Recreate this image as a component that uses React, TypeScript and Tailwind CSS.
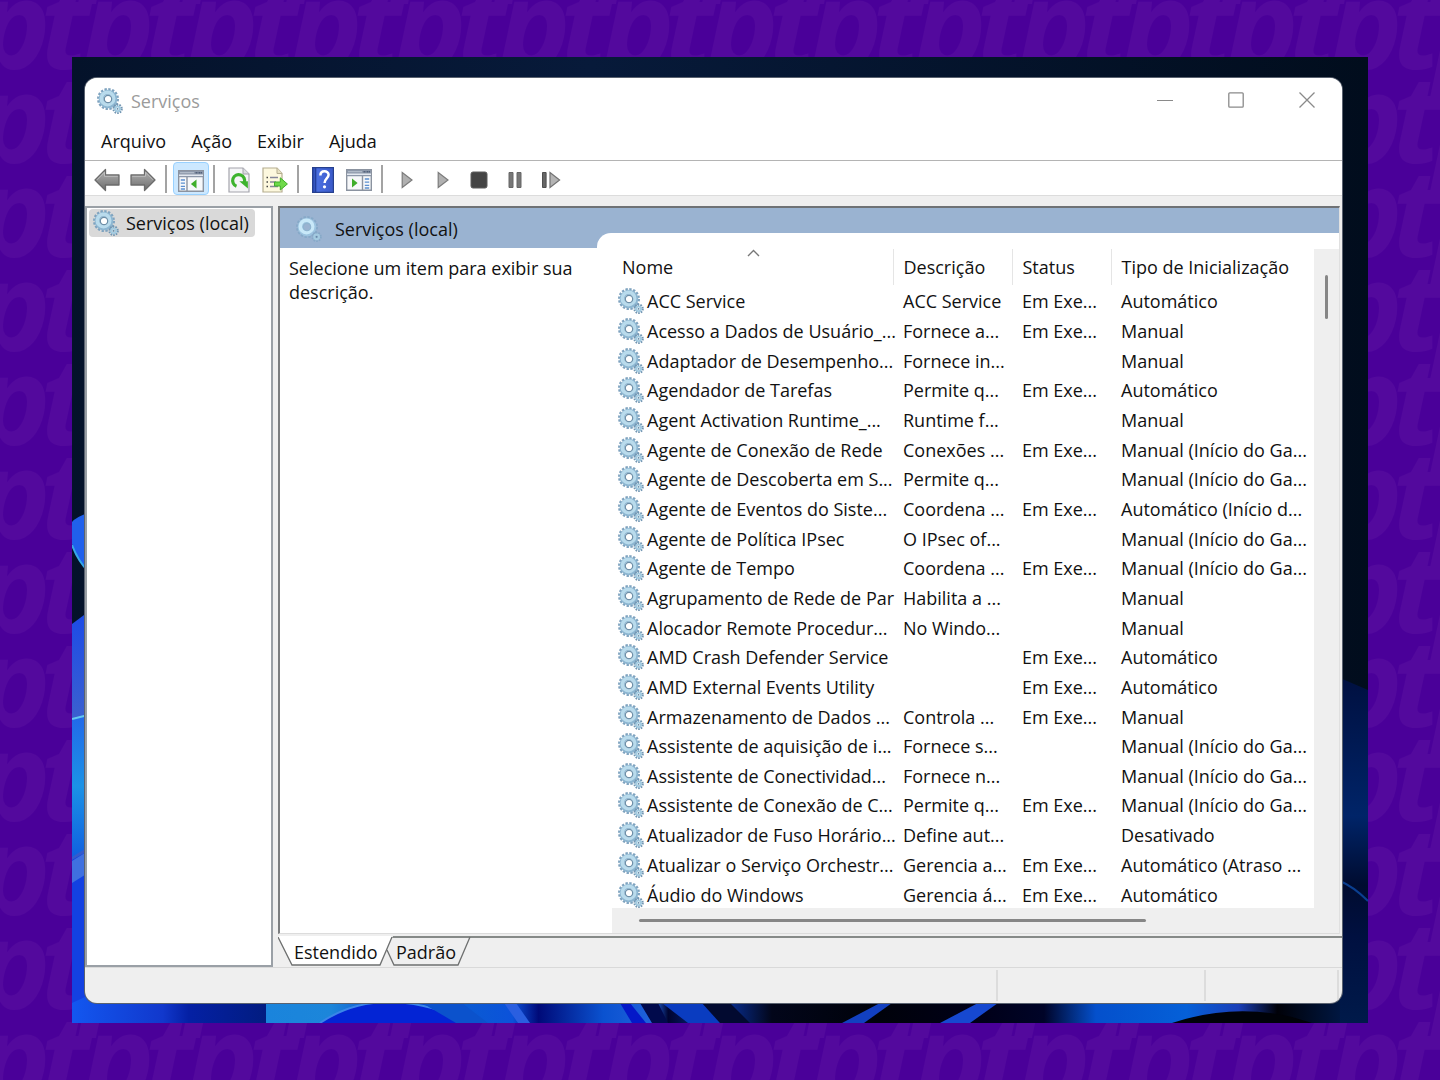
import React from 'react';

const services: [string, string, string, string][] = [
  ['ACC Service', 'ACC Service', 'Em Exe...', 'Automático'],
  ['Acesso a Dados de Usuário_...', 'Fornece a...', 'Em Exe...', 'Manual'],
  ['Adaptador de Desempenho...', 'Fornece in...', '', 'Manual'],
  ['Agendador de Tarefas', 'Permite q...', 'Em Exe...', 'Automático'],
  ['Agent Activation Runtime_...', 'Runtime f...', '', 'Manual'],
  ['Agente de Conexão de Rede', 'Conexões ...', 'Em Exe...', 'Manual (Início do Ga...'],
  ['Agente de Descoberta em S...', 'Permite q...', '', 'Manual (Início do Ga...'],
  ['Agente de Eventos do Siste...', 'Coordena ...', 'Em Exe...', 'Automático (Início d...'],
  ['Agente de Política IPsec', 'O IPsec of...', '', 'Manual (Início do Ga...'],
  ['Agente de Tempo', 'Coordena ...', 'Em Exe...', 'Manual (Início do Ga...'],
  ['Agrupamento de Rede de Par', 'Habilita a ...', '', 'Manual'],
  ['Alocador Remote Procedur...', 'No Windo...', '', 'Manual'],
  ['AMD Crash Defender Service', '', 'Em Exe...', 'Automático'],
  ['AMD External Events Utility', '', 'Em Exe...', 'Automático'],
  ['Armazenamento de Dados ...', 'Controla ...', 'Em Exe...', 'Manual'],
  ['Assistente de aquisição de i...', 'Fornece s...', '', 'Manual (Início do Ga...'],
  ['Assistente de Conectividad...', 'Fornece n...', '', 'Manual (Início do Ga...'],
  ['Assistente de Conexão de C...', 'Permite q...', 'Em Exe...', 'Manual (Início do Ga...'],
  ['Atualizador de Fuso Horário...', 'Define aut...', '', 'Desativado'],
  ['Atualizar o Serviço Orchestr...', 'Gerencia a...', 'Em Exe...', 'Automático (Atraso ...'],
  ['Áudio do Windows', 'Gerencia á...', 'Em Exe...', 'Automático'],
];

function Gears({ pale = false }: { pale?: boolean }) {
  return (
    <svg width="26" height="26" viewBox="0 0 26 26" fill="none" className="shrink-0" aria-hidden="true">
      <circle cx="11" cy="11" r="9.6" stroke={pale ? '#86a9c8' : '#7fa3bf'} strokeWidth="2.8" strokeDasharray="2.3 1.47" />
      <circle cx="11" cy="11" r="6.8" stroke={pale ? '#9cc3df' : '#8db6d1'} strokeWidth="5" />
      <circle cx="10.5" cy="10.4" r="6.2" stroke={pale ? '#c8e8f8' : '#b9dbec'} strokeWidth="3.6" />
      <circle cx="11" cy="11" r="3.7" fill={pale ? '#9ab3d1' : '#fff'} stroke={pale ? '#8fb4cf' : '#6d8fa8'} strokeWidth="1.2" />
      <circle cx="20.6" cy="20.8" r="4" stroke={pale ? '#86a9c8' : '#7296b2'} strokeWidth="2.4" strokeDasharray="1.5 1.01" />
      <circle cx="20.6" cy="20.8" r="2.4" stroke="#a3cbe1" strokeWidth="2" />
      <circle cx="20.6" cy="20.8" r="0.9" fill="#5c87a5" />
    </svg>
  );
}

function Arrow({ flip = false }: { flip?: boolean }) {
  return (
    <svg width="26" height="24" viewBox="0 0 26 24" className={flip ? '-scale-x-100' : ''} aria-hidden="true">
      <defs>
        <linearGradient id={flip ? 'arrow-r' : 'arrow-l'} x1="0" y1="0" x2="0" y2="1">
          <stop offset="0" stopColor="#b4b4b4" />
          <stop offset="1" stopColor="#6c6c6c" />
        </linearGradient>
      </defs>
      <path d="M1 12 11.5 1.5V7H25v10H11.5v5.5Z" fill={flip ? 'url(#arrow-r)' : 'url(#arrow-l)'} stroke="#6b6b6b" strokeWidth="1.3" strokeLinejoin="round" />
      <path d="M3 11.8 10.5 4.2V8.3H23.8" fill="none" stroke="#bdbdbd" strokeWidth="1" />
    </svg>
  );
}

function PaneIcon({ right = false }: { right?: boolean }) {
  return (
    <svg width="26" height="22" viewBox="0 0 26 22" aria-hidden="true">
      <path d="M.7.7h24.6v20.6H.7Z" fill="#f7f8fa" stroke="#8b93a0" strokeWidth="1.4" />
      <path d="M1 1h24v6.2H1Z" fill="#8d98aa" />
      <path d="M1 4.5h24v1.4H1Z" fill="#e3e8f0" />
      <path d="M2 2.7h14" stroke="#b9c2cf" />
      <path d="M17.5 2.7h2M20.5 2.7h2M23 2.7h1" stroke="#52617a" strokeWidth="1.4" />
      {right ? (
        <>
          <path d="M16.5 7v14" stroke="#8b93a0" strokeWidth="1.4" />
          <path d="M18.8 10h4.4M18.8 13.2h4.4M18.8 16.4h4.4M18.8 19h4.4" stroke="#5c8fd0" strokeWidth="1.3" />
          <path d="M6 9.5v9l5.6-4.5Z" fill="#3fae2a" />
        </>
      ) : (
        <>
          <path d="M9 7v14" stroke="#8b93a0" strokeWidth="1.4" />
          <path d="M2.8 10h4.2M2.8 13.2h4.2M2.8 16.4h4.2M2.8 19h4.2" stroke="#5c8fd0" strokeWidth="1.3" />
          <path d="M18.5 9.5v9L12.9 14Z" fill="#3fae2a" />
        </>
      )}
    </svg>
  );
}

function RefreshIcon() {
  return (
    <svg width="22" height="26" viewBox="0 0 22 26" aria-hidden="true">
      <path d="M1 1h14l6 6v18H1Z" fill="#f5f5f7" stroke="#a4a4ac" strokeWidth="1.2" />
      <path d="M15 1v6h6" fill="#dcdce2" stroke="#a4a4ac" />
      <path d="M8.5 19.2a6 6 0 1 1 7.8-3.6" fill="none" stroke="#3db32e" strokeWidth="3.2" />
      <path d="M11.3 14.2h8.6v7.2Z" fill="#3db32e" />
    </svg>
  );
}

function ExportIcon() {
  return (
    <svg width="26" height="26" viewBox="0 0 26 26" aria-hidden="true">
      <path d="M1 1h14l5 5.5V25H1Z" fill="#fdf8de" stroke="#b5ad90" strokeWidth="1.2" />
      <path d="M15 1v5.5h5" fill="#e8e2c4" stroke="#b5ad90" />
      <path d="M4.5 10.5H6M4.5 15H6M4.5 19.5H6" stroke="#444" strokeWidth="1.7" />
      <path d="M8 10.5h8M8 15h6M8 19.5h8" stroke="#86869a" strokeWidth="1.5" />
      <path d="M12.5 15h5.8v-4.2L25.4 17l-7.1 6V19h-5.8Z" fill="#6fd94a" stroke="#3fae2a" />
    </svg>
  );
}

function HelpIcon() {
  return (
    <svg width="22" height="26" viewBox="0 0 22 26" aria-hidden="true">
      <defs>
        <linearGradient id="help" x1="0" y1="0" x2="1" y2="0">
          <stop offset="0" stopColor="#2746ae" />
          <stop offset=".25" stopColor="#4a6fe0" />
          <stop offset="1" stopColor="#3a59c9" />
        </linearGradient>
      </defs>
      <path d="M.6.6h20.8v24.8H.6Z" fill="url(#help)" stroke="#26408f" strokeWidth="1.2" />
      <path d="M3.6 1v24" stroke="#233f9c" strokeWidth="1.2" />
      <path d="M8.4 8.4c0-5.6 8.2-5.2 8.2-.6 0 3.6-4 3.8-4 8.2" fill="none" stroke="#fff" strokeWidth="2.5" />
      <circle cx="12.5" cy="19.8" r="1.6" fill="#fff" />
    </svg>
  );
}

function PlayIcon() {
  return (
    <svg width="12" height="18" viewBox="0 0 12 18" aria-hidden="true">
      <path d="M1.2 1.5v15L11 9Z" fill="#b0b0b0" stroke="#7c7c7c" strokeWidth="1.2" />
    </svg>
  );
}

function StopIcon() {
  return (
    <svg width="18" height="18" viewBox="0 0 18 18" aria-hidden="true">
      <rect x="1" y="1" width="16" height="16" rx="2" fill="#444" stroke="#5c5c5c" />
    </svg>
  );
}

function PauseIcon() {
  return (
    <svg width="14" height="18" viewBox="0 0 14 18" aria-hidden="true">
      <path d="M1 1.5h4v15H1ZM9 1.5h4v15H9Z" fill="#777" stroke="#666" />
    </svg>
  );
}

function RestartIcon() {
  return (
    <svg width="20" height="18" viewBox="0 0 20 18" aria-hidden="true">
      <path d="M1.5 1.5h3.6v15H1.5Z" fill="#666" stroke="#4f4f4f" />
      <path d="M9 1.5v15L18.6 9Z" fill="#b4b4b4" stroke="#747474" strokeWidth="1.2" />
    </svg>
  );
}

function ToolButton({ label, active = false, children }: { label: string; active?: boolean; children: React.ReactNode }) {
  return (
    <button
      type="button"
      aria-label={label}
      className={
        active
          ? 'flex h-[33px] w-9 items-center justify-center rounded-sm border border-[#99d1ff] bg-[#cce8ff] pt-1'
          : 'flex h-[33px] w-9 items-center justify-center pt-0.5'
      }
    >
      {children}
    </button>
  );
}

function Separator() {
  return <span className="mr-1.5 mb-0.5 ml-1 h-7 w-0.5 bg-[#a3a3a3]" />;
}

const tileOffsets = [-104, 0, 104].flatMap((x) => [-94, 0, 94].map((y) => ({ x, y })));

function Backdrop() {
  return (
    <svg className="absolute inset-0 h-full w-full" aria-hidden="true">
      <defs>
        <text id="mark" x="-22 40" y="69" fill="#53099d" className="font-['Open_Sans','Noto_Sans',sans-serif] text-[122px] font-bold italic">
          pt
        </text>
        <pattern id="marks" width="104" height="94" patternUnits="userSpaceOnUse">
          {tileOffsets.map(({ x, y }) => (
            <use key={`${x}/${y}`} href="#mark" x={x} y={y} />
          ))}
        </pattern>
      </defs>
      <rect width="100%" height="100%" fill="url(#marks)" />
    </svg>
  );
}

function Wallpaper() {
  return (
    <svg className="absolute inset-0 h-full w-full" viewBox="0 0 1296 966" preserveAspectRatio="none" aria-hidden="true">
      <defs>
        <linearGradient id="sky" x1="0" y1="0" x2="1" y2="0">
          <stop offset="0" stopColor="#04122a" />
          <stop offset=".4" stopColor="#071a3a" />
          <stop offset="1" stopColor="#010d1d" />
        </linearGradient>
        <linearGradient id="petal" x1="0" y1="0" x2="0" y2="1">
          <stop offset="0" stopColor="#1c4be8" />
          <stop offset=".25" stopColor="#3a5fd0" />
          <stop offset="1" stopColor="#2c55c8" />
        </linearGradient>
        <linearGradient id="cyan" x1="0" y1="0" x2="0" y2="1">
          <stop offset="0" stopColor="#2268ea" />
          <stop offset=".5" stopColor="#1b92e6" />
          <stop offset="1" stopColor="#1060e0" />
        </linearGradient>
        <linearGradient id="floor" x1="0" y1="0" x2="1" y2="0">
          <stop offset="0" stopColor="#1357f0" />
          <stop offset=".07" stopColor="#1138cc" />
          <stop offset=".09" stopColor="#0420a4" />
          <stop offset=".15" stopColor="#021c80" />
          <stop offset=".15" stopColor="#1a84dc" />
          <stop offset=".2" stopColor="#1c86da" />
          <stop offset=".25" stopColor="#0c42cc" />
          <stop offset=".3" stopColor="#0a5bd2" />
          <stop offset=".34" stopColor="#0b52da" />
          <stop offset=".36" stopColor="#000a78" />
          <stop offset=".41" stopColor="#0a52d0" />
          <stop offset=".45" stopColor="#2162dc" />
          <stop offset=".46" stopColor="#000430" />
          <stop offset=".5" stopColor="#0a36a8" />
          <stop offset=".54" stopColor="#02061a" />
          <stop offset=".62" stopColor="#00020a" />
          <stop offset=".7" stopColor="#000018" />
          <stop offset=".75" stopColor="#000428" />
          <stop offset=".79" stopColor="#0450cc" />
          <stop offset=".86" stopColor="#0560d8" />
          <stop offset=".9" stopColor="#1a3fb8" />
          <stop offset=".93" stopColor="#000108" />
          <stop offset="1" stopColor="#00205a" />
        </linearGradient>
        <linearGradient id="right" x1="0" y1="0" x2="0" y2="1">
          <stop offset="0" stopColor="#001040" />
          <stop offset=".4" stopColor="#002468" />
          <stop offset=".6" stopColor="#000c30" />
          <stop offset=".75" stopColor="#001040" />
          <stop offset="1" stopColor="#001a4a" />
        </linearGradient>
      </defs>
      <path d="M0 0h1296v966H0Z" fill="url(#sky)" />
      <path d="M16 456Q4 460 0 465V487Q6 506 16 512Z" fill="#2060ec" />
      <path d="M0 488q6 16 16 26" stroke="#37a9e8" strokeWidth="2" fill="none" />
      <path d="M0 567 16 555V965H0Z" fill="url(#petal)" />
      <path d="M0 662 16 658V790L0 800Z" fill="url(#cyan)" />
      <path d="M0 662 16 658" stroke="#62c8f0" strokeWidth="2" />
      <path d="M0 803 16 794V966H0Z" fill="#1341e2" />
      <path d="M0 804 16 794v22L0 826Z" fill="#3f70e0" />
      <path d="M13 940h1283v26H0V946Z" fill="url(#floor)" />
      <path d="M248 966Q310 924 400 966Z" fill="#0324d4" />
      <path d="M248 966Q310 924 400 966" fill="none" stroke="#3a86e8" strokeWidth="2" />
      <path d="m350 946h40l26 20h-32Z" fill="#0b52cc" />
      <path d="m432 946h12l14 20h-12Z" fill="#2a5fe0" />
      <path d="m548 946h10l16 20h-14Z" fill="#0418c8" />
      <path d="m568 946h18l10 20h-16Z" fill="#010a4c" />
      <path d="m590 946h40l18 20h-32Z" fill="#0a3cc0" />
      <path d="m630 946h28l20 20h-30Z" fill="#020a30" />
      <path d="m770 966 38-20h12l-28 20Z" fill="#1240c0" />
      <path d="m868 966 38-20h20l-28 20Z" fill="#1648d0" />
      <path d="M1100 966q60-20 120-6l20 6Z" fill="#000208" />
      <path d="M1268 621l28 12v333h-28Z" fill="url(#right)" />
      <path d="M1268 824q14 6 28 20" stroke="#0a3f90" strokeWidth="2" fill="none" />
    </svg>
  );
}

export default function App() {
  return (
    <div className="relative flex min-h-screen flex-col overflow-hidden bg-[#4a0099] px-[72px] py-[57px] font-['Open_Sans','Noto_Sans',sans-serif] text-lg leading-6 text-[#111]">
      <Backdrop />
      <main className="relative flex flex-1 flex-col pt-[21px] pr-[26px] pb-5 pl-[13px]">
        <Wallpaper />
        <div className="relative flex flex-1 flex-col overflow-hidden rounded-xl bg-[#efefef] ring-1 ring-[#5a6270]">
          <header className="flex h-[46px] items-center bg-white pl-3">
            <Gears />
            <h1 className="ml-2 flex-1 text-[#9b9b9b]">Serviços</h1>
            <div className="flex pb-0.5 text-[#8a8a8a]">
              <button type="button" aria-label="Minimizar" className="flex h-11 w-[71px] items-center justify-center">
                <svg width="16" height="16" viewBox="0 0 16 16" stroke="currentColor" aria-hidden="true"><path d="M0 8.5h16" /></svg>
              </button>
              <button type="button" aria-label="Maximizar" className="flex h-11 w-[71px] items-center justify-center">
                <svg width="16" height="16" viewBox="0 0 16 16" fill="none" stroke="currentColor" strokeWidth="1.3" aria-hidden="true"><rect x=".8" y=".8" width="14.4" height="14.4" rx="1" /></svg>
              </button>
              <button type="button" aria-label="Fechar" className="flex h-11 w-[71px] items-center justify-center">
                <svg width="16" height="16" viewBox="0 0 16 16" stroke="currentColor" strokeWidth="1.3" aria-hidden="true"><path d="m.5.5 15 15M15.5.5l-15 15" /></svg>
              </button>
            </div>
          </header>

          <nav className="flex h-9 items-center gap-[25px] bg-white pb-0.5 pl-4" aria-label="Menu">
            <button type="button">Arquivo</button>
            <button type="button">Ação</button>
            <button type="button">Exibir</button>
            <button type="button">Ajuda</button>
          </nav>

          <div className="flex h-9 items-end border-y border-t-[#b4b4b4] border-b-[#dcdcdc] bg-white pl-1" role="toolbar" aria-label="Ferramentas">
            <ToolButton label="Voltar"><Arrow /></ToolButton>
            <ToolButton label="Avançar"><Arrow flip /></ToolButton>
            <Separator />
            <ToolButton label="Mostrar árvore de console" active><PaneIcon /></ToolButton>
            <Separator />
            <ToolButton label="Atualizar"><RefreshIcon /></ToolButton>
            <ToolButton label="Exportar lista"><ExportIcon /></ToolButton>
            <Separator />
            <ToolButton label="Ajuda"><HelpIcon /></ToolButton>
            <ToolButton label="Mostrar painel de ações"><PaneIcon right /></ToolButton>
            <Separator />
            <ToolButton label="Iniciar serviço"><PlayIcon /></ToolButton>
            <ToolButton label="Retomar serviço"><PlayIcon /></ToolButton>
            <ToolButton label="Parar serviço"><StopIcon /></ToolButton>
            <ToolButton label="Pausar serviço"><PauseIcon /></ToolButton>
            <ToolButton label="Reiniciar serviço"><RestartIcon /></ToolButton>
          </div>

          <div className="mt-2.5 flex flex-1 gap-[5px]">
            <aside className="w-[188px] shrink-0 border-2 border-[#9aa0a6] bg-white px-0.5 py-px">
              <button type="button" className="flex h-7 items-center gap-[7px] rounded-sm bg-[#d9d9d9] pr-1.5 pl-1 whitespace-nowrap">
                <Gears />
                Serviços (local)
              </button>
            </aside>

            <div className="flex min-w-0 flex-1 flex-col">
              <section className="mr-0.5 flex flex-1 border-t-2 border-r border-b border-l-2 border-t-[#6f7275] border-r-[#e0e0e0] border-b-[#dcdcdc] border-l-[#7b7d7f] bg-white">
                <div className="flex w-[317px] shrink-0 flex-col">
                  <h2 className="flex h-10 items-center gap-[13px] bg-[#9ab3d1] pt-0.5 pl-4">
                    <Gears pale />
                    Serviços (local)
                  </h2>
                  <p className="py-2 pr-2 pl-[9px]">Selecione um item para exibir sua descrição.</p>
                </div>

                <div className="flex min-w-0 flex-1 flex-col bg-[linear-gradient(#9ab3d1_40px,#fff_40px)] pt-[25px]">
                  <div className="grid flex-1 grid-cols-[1fr_25px] grid-rows-[1fr_25px] rounded-tl-[14px] bg-white pt-4 pl-[15px]">
                    <table className="h-full w-full table-fixed border-collapse text-left whitespace-nowrap">
                      <thead>
                        <tr className="h-9">
                          <th scope="col" className="relative w-[281px] border-r border-[#e5e5e5] p-0 pl-2.5 font-normal">
                            Nome
                            <svg className="absolute top-0 left-[135px]" width="13" height="8" viewBox="0 0 13 8" fill="none" stroke="#777" strokeWidth="1.4" aria-hidden="true"><path d="m1 7 5.5-5.5L12 7" /></svg>
                          </th>
                          <th scope="col" className="w-[119px] border-r border-[#e5e5e5] p-0 pl-2.5 font-normal">Descrição</th>
                          <th scope="col" className="w-[99px] border-r border-[#e5e5e5] p-0 pl-2.5 font-normal">Status</th>
                          <th scope="col" className="p-0 pl-2.5 font-normal">Tipo de Inicialização</th>
                        </tr>
                      </thead>
                      <tbody>
                        {services.map(([name, description, status, startup]) => (
                          <tr key={name}>
                            <td className="px-0 pt-[3px] pb-0 pl-1.5">
                              <div className="flex items-center gap-[3px]">
                                <Gears />
                                {name}
                              </div>
                            </td>
                            <td className="px-0 pt-[3px] pb-0 pl-2.5">{description}</td>
                            <td className="px-0 pt-[3px] pb-0 pl-2.5">{status}</td>
                            <td className="px-0 pt-[3px] pb-0 pl-2.5">{startup}</td>
                          </tr>
                        ))}
                      </tbody>
                    </table>
                    <div className="flex justify-center bg-[#efefef] pt-[26px]">
                      <div className="h-11 w-[3px] rounded-full bg-[#868686]" />
                    </div>
                    <div className="col-span-2 flex items-center bg-[#efefef] pr-[193px] pl-[27px]">
                      <div className="h-[3px] flex-1 rounded-full bg-[#868686]" />
                    </div>
                  </div>
                </div>
              </section>

              <div className="relative mt-0.5 flex h-[31px] items-center" role="tablist" aria-label="Modo de exibição">
                <div className="absolute top-0 right-0 left-[114px] h-0.5 bg-[#868a88]" />
                <svg className="absolute top-0 left-0" width="194" height="31" viewBox="0 0 194 31" fill="none" stroke="#6e7070" strokeWidth="1.3" aria-hidden="true">
                  <path d="M0 0h115l-14 29H14L0 1Z" fill="#fff" stroke="none" />
                  <path d="M0 1l14 28h88l12-28" />
                  <path d="M109 14l7 15h64l12-28" />
                </svg>
                <button type="button" role="tab" aria-selected="true" className="relative ml-4 w-[102px] text-left">Estendido</button>
                <button type="button" role="tab" aria-selected="false" className="relative">Padrão</button>
              </div>
            </div>
          </div>

          <footer className="flex h-9 border-t border-[#d9d9d9] pr-[3px]">
            <div className="my-0.5 flex-1 border-r-2 border-[#dcdcdc]" />
            <div className="my-0.5 w-[208px] border-r-2 border-[#dcdcdc]" />
            <div className="my-0.5 w-[133px] border-r-2 border-[#dcdcdc]" />
          </footer>
        </div>
      </main>
    </div>
  );
}
